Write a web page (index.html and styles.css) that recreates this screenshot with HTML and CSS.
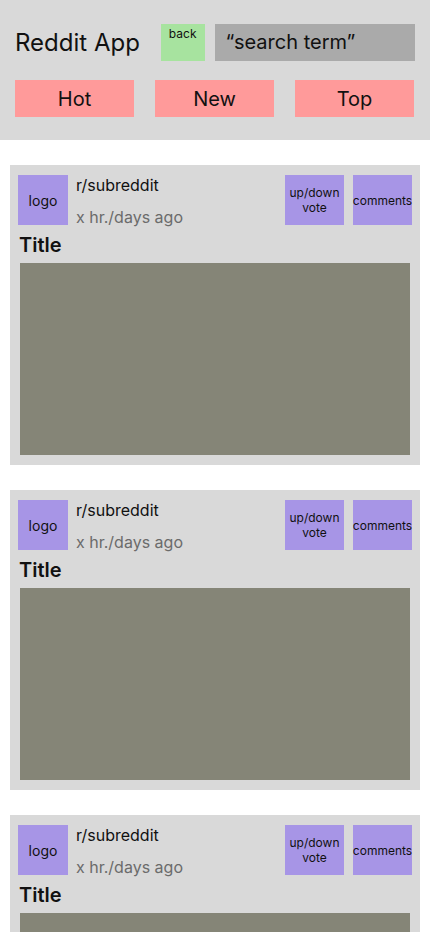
FILE: index.html
```html
<!DOCTYPE html>
<html lang="en">
  <head>
    <meta charset="UTF-8" />
    <meta name="viewport" content="width=device-width, initial-scale=1.0" />
    <title>Reddit App</title>
    <link rel="stylesheet" href="styles.css">
  </head>
  <body>
    <header class="app-header">
      <div class="top-row">
        <h1>Reddit App</h1>
        <button type="button" class="back-btn">back</button>
        <div class="search-box">“search term”</div>
      </div>
      <div class="sort-tabs">
        <button type="button" class="tab">Hot</button>
        <button type="button" class="tab">New</button>
        <button type="button" class="tab">Top</button>
      </div>
    </header>

    <main class="feed">
      <!-- Post cards -->
      <article class="post">
        <div class="post-head">
          <div class="logo">logo</div>
          <div class="post-info">
            <span class="sub">r/subreddit</span>
            <span class="age">x hr./days ago</span>
          </div>
          <div class="action">up/down<br>vote</div>
          <div class="action">comments</div>
        </div>
        <h2 class="post-title">Title</h2>
        <div class="post-image"></div>
      </article>

      <article class="post">
        <div class="post-head">
          <div class="logo">logo</div>
          <div class="post-info">
            <span class="sub">r/subreddit</span>
            <span class="age">x hr./days ago</span>
          </div>
          <div class="action">up/down<br>vote</div>
          <div class="action">comments</div>
        </div>
        <h2 class="post-title">Title</h2>
        <div class="post-image"></div>
      </article>

      <article class="post">
        <div class="post-head">
          <div class="logo">logo</div>
          <div class="post-info">
            <span class="sub">r/subreddit</span>
            <span class="age">x hr./days ago</span>
          </div>
          <div class="action">up/down<br>vote</div>
          <div class="action">comments</div>
        </div>
        <h2 class="post-title">Title</h2>
        <div class="post-image"></div>
      </article>
    </main>
  </body>
</html>
```

FILE: styles.css
```css
* {
  margin: 0;
  padding: 0;
  box-sizing: border-box;
}

body {
  font-family: "Inter", "Liberation Sans", sans-serif;
  background: #fff;
  color: #111;
}

button {
  font-family: inherit;
  border: none;
  color: #111;
  cursor: pointer;
}

/* Header */
.app-header {
  background-color: #d9d9d9;
  padding: 24px 15px 23px;
}

.top-row {
  display: flex;
  align-items: center;
  height: 37px;
}

.top-row h1 {
  font-size: 24px;
  font-weight: 400;
  width: 146px;
  line-height: 28px;
}

.back-btn {
  width: 44px;
  height: 37px;
  margin-left: 1px;
  background-color: #a7e39f;
  font-size: 12px;
  line-height: 14px;
  padding-top: 3px;
  align-self: stretch;
  display: flex;
  justify-content: center;
  align-items: flex-start;
}

.search-box {
  margin-left: 10px;
  width: 202px;
  height: 37px;
  background-color: #aaaaaa;
  font-size: 20px;
  line-height: 37px;
  padding-left: 11px;
}

.sort-tabs {
  display: flex;
  gap: 21px;
  margin-top: 19px;
}

.tab {
  width: 119px;
  height: 37px;
  background-color: #ff9a9a;
  font-size: 20px;
}

/* Feed */
.feed {
  padding: 25px 10px 0;
  display: flex;
  flex-direction: column;
  gap: 25px;
}

.post {
  background-color: #d9d9d9;
  padding: 10px 8px;
}

.post-head {
  display: flex;
  height: 50px;
}

.logo {
  width: 50px;
  height: 50px;
  background-color: #a795e6;
  display: flex;
  justify-content: center;
  align-items: center;
  font-size: 14px;
}

.post-info {
  flex: 1;
  margin-left: 8px;
  display: flex;
  flex-direction: column;
  justify-content: space-between;
  font-size: 16px;
  line-height: 20px;
}

.age {
  color: #6b6b6b;
  position: relative;
  top: 2px;
}

.action {
  width: 59px;
  height: 50px;
  background-color: #a795e6;
  margin-left: 9px;
  display: flex;
  justify-content: center;
  align-items: center;
  text-align: center;
  font-size: 12px;
  line-height: 15px;
}

.post-title {
  font-size: 20px;
  font-weight: 600;
  line-height: 24px;
  margin: 8px 0 0 1px;
}

.post-image {
  height: 192px;
  margin: 6px 2px 0;
  background-color: #858577;
}
```
